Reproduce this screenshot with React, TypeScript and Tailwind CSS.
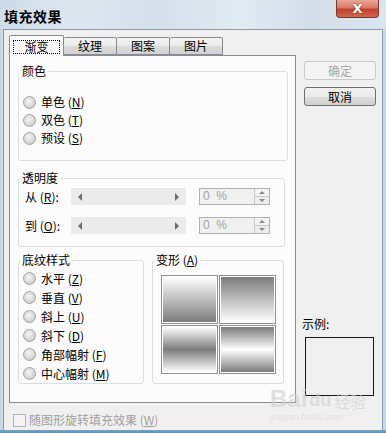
import React from "react";

const Radio = ({ label, k, h = "h-[18px]" }: { label: string; k: string; h?: string }) => (
  <div className={`flex items-center ${h}`}>
    <span className="w-[13px] h-[13px] rounded-full border border-[#a3a3a3] bg-[radial-gradient(circle_at_45%_40%,#f6f6f6,#d6d6d6_60%,#bdbdbd)] shrink-0" />
    <span className="ml-[5px] text-[12px] leading-[14px] text-black whitespace-nowrap">
      {label} (<span className="underline">{k}</span>)
    </span>
  </div>
);

const Group = ({
  legend,
  className,
  children,
}: {
  legend: React.ReactNode;
  className: string;
  children?: React.ReactNode;
}) => (
  <div className={`relative border border-[#d5dfe5] rounded-[3px] ${className}`}>
    <span className="absolute left-[1px] top-[-8px] px-[2px] bg-[#fcfcfc] text-[12px] leading-[14px] text-black whitespace-nowrap">
      {legend}
    </span>
    {children}
  </div>
);

const ScrollBar = () => (
  <div className="w-[115px] h-[17px] bg-[#ebebeb] flex items-center justify-between px-[7px]">
    <span className="w-0 h-0 border-y-[4px] border-y-transparent border-r-[4px] border-r-[#6e6e6e]" />
    <span className="w-0 h-0 border-y-[4px] border-y-transparent border-l-[4px] border-l-[#6e6e6e]" />
  </div>
);

const Spin = () => (
  <div className="ml-[13px] w-[71px] h-[17px] border border-[#b1b1b1] bg-[#f0f0f0] flex">
    <span className="flex-1 pl-[3px] text-[12px] leading-[15px] text-[#a3a3a3] font-['Liberation_Sans',sans-serif]">
      0&nbsp;&nbsp;%
    </span>
    <div className="w-[15px] flex flex-col border-l border-[#c8c8c8]">
      <div className="flex-1 flex items-center justify-center border-b border-[#c8c8c8] bg-[#f4f4f4]">
        <span className="w-0 h-0 border-x-[3px] border-x-transparent border-b-[3px] border-b-[#8a8a8a]" />
      </div>
      <div className="flex-1 flex items-center justify-center bg-[#ececec]">
        <span className="w-0 h-0 border-x-[3px] border-x-transparent border-t-[3px] border-t-[#8a8a8a]" />
      </div>
    </div>
  </div>
);

const Tile = ({ g }: { g: string }) => (
  <div className="w-[57px] h-[49px] border border-[#8e8e8e] bg-white p-px">
    <div className={`w-full h-full ${g}`} />
  </div>
);

export default function App() {
  return (
    <div className="relative w-[386px] h-[433px] overflow-hidden flex flex-col bg-[#c9d8e6] font-['Noto_Sans_CJK_SC','Noto_Sans',sans-serif]">
      {/* title bar */}
      <div className="h-[29px] shrink-0 flex items-start justify-between pl-[4px] pr-[7px] bg-[linear-gradient(90deg,#cddcea,#dfe8f1_20%,#d3dfeb_40%,#e3ebf3_62%,#d2deea_80%,#dbe5ef)]">
        <span className="mt-[7px] text-[14px] leading-[18px] font-bold text-black tracking-[0.5px]">填充效果</span>
        <div className="w-[43px] h-[18px] rounded-b-[4px] border border-t-0 border-[#7a3a30] bg-[linear-gradient(180deg,#e9a998,#d97a66_45%,#c2412f_55%,#d2634a)] flex items-center justify-center">
          <span className="text-white text-[13px] leading-[14px] font-bold font-['DejaVu_Sans',sans-serif] [text-shadow:0_0_2px_#6b1a10]">X</span>
        </div>
      </div>

      {/* body */}
      <div className="mx-[3px] h-[401px] shrink-0 bg-[#f0f0f0] border border-b-0 border-[#8d9aa8] pl-[5px] pt-[5px] flex">
        {/* left column */}
        <div className="w-[287px] flex flex-col">
          {/* tabs */}
          <div className="h-[21px] -mb-px flex items-start relative z-10 text-[12px] leading-[14px]">
            <div className="w-[55px] h-[21px] bg-[#fcfcfc] border border-b-0 border-[#898c95] rounded-t-[2px] flex justify-center pt-[4px]">
              <span className="w-[47px] h-[14px] border border-dotted border-black flex items-center justify-center">渐变</span>
            </div>
            {["纹理", "图案", "图片"].map((t) => (
              <div
                key={t}
                className="mt-[2px] w-[53px] h-[18px] border border-l-0 border-[#898c95] rounded-t-[2px] bg-[linear-gradient(180deg,#f4f4f4,#ebebeb_50%,#dcdcdc_51%,#d2d2d2)] flex items-center justify-center"
              >
                {t}
              </div>
            ))}
          </div>

          {/* panel */}
          <div className="h-[348px] border border-[#898c95] bg-[#fcfcfc] pl-[8px] pt-[15px] flex flex-col">
            <Group legend="颜色" className="w-[270px] h-[90px] pt-[21px] pl-[4px]">
              <Radio label="单色" k="N" />
              <Radio label="双色" k="T" />
              <Radio label="预设" k="S" />
            </Group>

            <Group legend="透明度" className="mt-[17px] w-[267px] h-[69px] pt-[9px] pl-[6px] text-[12px] leading-[14px]">
              <div className="flex items-center h-[17px]">
                <span className="w-[46px] whitespace-nowrap">
                  从 (<span className="underline">R</span>):
                </span>
                <ScrollBar />
                <Spin />
              </div>
              <div className="flex items-center h-[17px] mt-[12px]">
                <span className="w-[46px] whitespace-nowrap">
                  到 (<span className="underline">O</span>):
                </span>
                <ScrollBar />
                <Spin />
              </div>
            </Group>

            <div className="mt-[13px] flex gap-[8px]">
              <Group legend="底纹样式" className="w-[126px] h-[124px] pt-[8px] pl-[4px]">
                <Radio label="水平" k="Z" h="h-[19px]" />
                <Radio label="垂直" k="V" h="h-[19px]" />
                <Radio label="斜上" k="U" h="h-[19px]" />
                <Radio label="斜下" k="D" h="h-[19px]" />
                <Radio label="角部幅射" k="F" h="h-[19px]" />
                <Radio label="中心幅射" k="M" h="h-[19px]" />
              </Group>
              <Group
                legend={
                  <>
                    变形 (<span className="underline">A</span>)
                  </>
                }
                className="w-[132px] h-[124px] pt-[14px] pl-[8px]"
              >
                <div className="grid grid-cols-[57px_57px] gap-[1px]">
                  <Tile g="bg-[linear-gradient(180deg,#ffffff,#7c7c7c)]" />
                  <Tile g="bg-[linear-gradient(180deg,#7c7c7c,#ffffff)]" />
                  <Tile g="bg-[linear-gradient(180deg,#ffffff,#7c7c7c_50%,#ffffff)]" />
                  <Tile g="bg-[linear-gradient(180deg,#7c7c7c,#ffffff_50%,#7c7c7c)]" />
                </div>
              </Group>
            </div>
          </div>

          {/* checkbox */}
          <div className="mt-[10px] flex items-center">
            <span className="ml-[4px] w-[13px] h-[13px] border border-[#b5b5b5] bg-[#f4f4f4]" />
            <span className="ml-[3px] text-[12px] leading-[14px] text-[#a0a0a0] whitespace-nowrap">
              随图形旋转填充效果 (<span className="underline">W</span>)
            </span>
          </div>
        </div>

        {/* right column */}
        <div className="ml-[6px] w-[76px] flex flex-col text-[12px] leading-[14px]">
          <div className="mt-[26px] ml-[2px] w-[72px] h-[19px] rounded-[3px] border border-[#c9c9c9] bg-[#f4f4f4] flex items-center justify-center text-[#a5a5a5]">
            确定
          </div>
          <div className="mt-[7px] ml-[2px] w-[72px] h-[19px] rounded-[3px] border border-[#707070] bg-[linear-gradient(180deg,#f2f2f2,#ebebeb_50%,#dddddd_51%,#cfcfcf)] flex items-center justify-center text-black">
            取消
          </div>
          <span className="mt-[211px] text-black">示例:</span>
          <div className="mt-[6px] ml-[3px] w-[69px] h-[59px] border border-[#1a1a1a] bg-[#f0f0f0]" />
        </div>
      </div>

      {/* bottom frame */}
      <div className="flex-1 bg-[linear-gradient(180deg,#7aa6c6,#5d8fb3)]" />

      {/* watermark */}
      <div className="absolute left-[270px] top-[388px] pointer-events-none select-none opacity-60">
        <div className="flex items-end text-[#cfcfcf] font-['Liberation_Sans',sans-serif] font-bold">
          <span className="text-[24px] leading-[22px]">Bai</span>
          <span className="text-[18px] leading-[20px] ml-[2px]">du</span>
          <span className="text-[16px] leading-[18px] ml-[3px] font-['Noto_Sans_CJK_SC',sans-serif] font-normal">经验</span>
        </div>
        <div className="mt-[2px] text-[9px] leading-[10px] text-[#d6d6d6] font-['Liberation_Sans',sans-serif]">jingyan.baidu.com</div>
      </div>
    </div>
  );
}
